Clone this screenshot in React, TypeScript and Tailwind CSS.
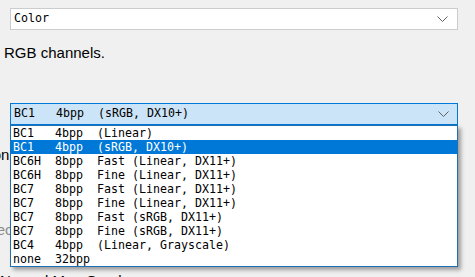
import React from 'react';

const formats = [
    'BC1   4bpp  (Linear)',
    'BC1   4bpp  (sRGB, DX10+)',
    'BC6H  8bpp  Fast (Linear, DX11+)',
    'BC6H  8bpp  Fine (Linear, DX11+)',
    'BC7   8bpp  Fast (Linear, DX11+)',
    'BC7   8bpp  Fine (Linear, DX11+)',
    'BC7   8bpp  Fast (sRGB, DX11+)',
    'BC7   8bpp  Fine (sRGB, DX11+)',
    'BC4   4bpp  (Linear, Grayscale)',
    'none  32bpp',
];

const Chevron: React.FC = () => (
    <svg width="11" height="6" viewBox="0 0 11 6" className="shrink-0">
        <polyline points="0.5,0.5 5.5,5.5 10.5,0.5" fill="none" stroke="#606060" strokeWidth="1" />
    </svg>
);

const mono = "font-['DejaVu_Sans_Mono','Liberation_Mono',monospace] text-[11.63px]";

export default function App() {
    return (
        <div className="relative w-[475px] h-[277px] overflow-hidden bg-[#f0f0f0] font-['Liberation_Sans',Arial,sans-serif] text-[15px] text-black">
            <div className="flex flex-col pt-[8px]">
                <div className="ml-[10px] w-[448px] h-[22px] bg-white border border-[#cccccc] flex items-center pl-[3px] pr-[9px]">
                    <span className={`${mono} flex-1`}>Color</span>
                    <Chevron />
                </div>

                {/* labels of the page scroll off the left edge */}
                <div className="mt-[13px] h-[20px] leading-[20px] whitespace-nowrap -ml-[21px]">the RGB channels.</div>

                <div className="mt-[40px] ml-[10px] w-[448px] h-[22px] bg-[#cce4f7] border border-[#0078d7] flex items-center pl-[3px] pr-[8px]">
                    <span className={`${mono} whitespace-pre flex-1`}>BC1   4bpp  (sRGB, DX10+)</span>
                    <Chevron />
                </div>

                <div className="mt-[20px] h-[20px] leading-[20px] whitespace-nowrap -ml-[79px]">Compression</div>
                <div className="mt-[55px] h-[20px] leading-[20px] whitespace-nowrap -ml-[25px] text-[#8c8c8c]">Selected</div>
                <div className="mt-[31px] h-[20px] leading-[20px] whitespace-nowrap">Normal Map Overlay</div>
            </div>

            <ul className="absolute left-[10px] top-[125px] w-[448px] bg-white border border-[#1f6fb5] shadow-[3px_3px_4px_rgba(0,0,0,0.35)]">
                {formats.map((f, i) => (
                    <li
                        key={f}
                        className={`${mono} h-[14px] leading-[14px] pl-[2px] whitespace-pre ${i === 1 ? 'bg-[#0078d7] text-white' : 'text-black'}`}
                    >
                        {f}
                    </li>
                ))}
            </ul>
        </div>
    );
}
